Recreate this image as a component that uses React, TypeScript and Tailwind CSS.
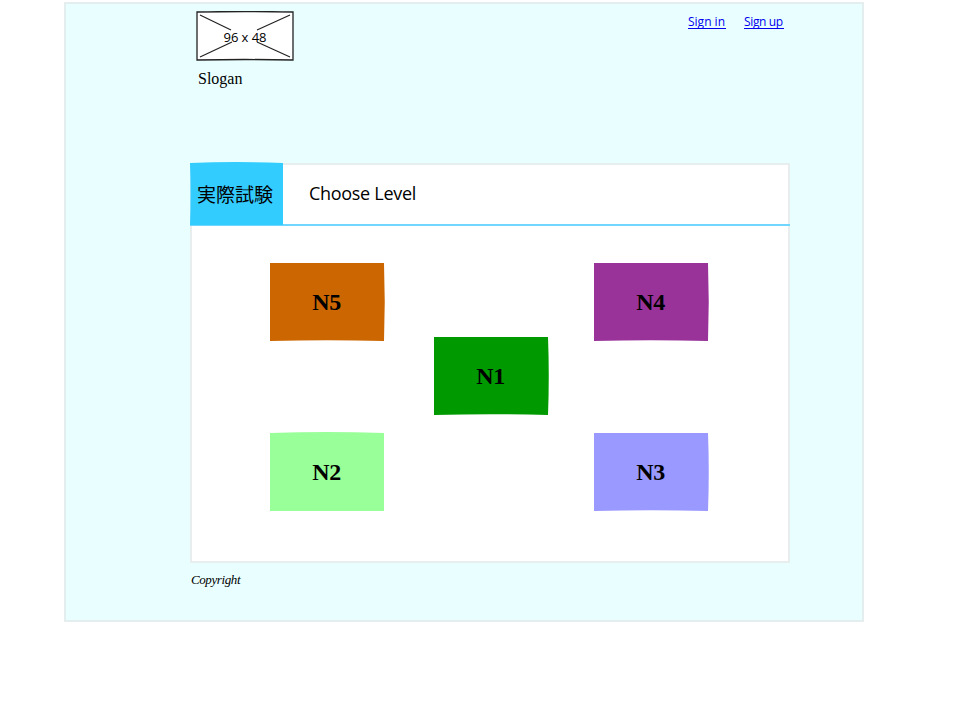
type TileProps = { label: string; place: string; fill: string; shape: string };

const bulgeRight = "M0 0H114Q115.5 39 114 78Q57 76.5 0 78Z";
const bulgeTop = "M0 0Q57 -2 114 0V78H0Z";

const tiles: TileProps[] = [
  { label: "N5", place: "col-start-1 row-start-1", fill: "#cc6600", shape: bulgeRight },
  { label: "N4", place: "col-start-3 row-start-1", fill: "#993399", shape: bulgeRight },
  { label: "N1", place: "col-start-2 row-start-2", fill: "#009900", shape: bulgeRight },
  { label: "N2", place: "col-start-1 row-start-3", fill: "#99ff99", shape: bulgeTop },
  { label: "N3", place: "col-start-3 row-start-3", fill: "#9999ff", shape: bulgeRight },
];

function Tile({ label, place, fill, shape }: TileProps) {
  return (
    <button className={`relative flex h-[78px] w-[114px] items-center justify-center ${place}`}>
      <svg className="absolute inset-0 overflow-visible" width="114" height="78">
        <path d={shape} fill={fill} />
      </svg>
      <span className="relative pr-px text-2xl font-bold leading-none tracking-[-0.3px]">{label}</span>
    </button>
  );
}

function Logo() {
  return (
    <svg className="block" width="98" height="50" viewBox="0 0 98 50">
      <path d="M1 1Q49 0 97 1V49Q49 48 1 49Z" fill="#fff" stroke="#222" strokeWidth="1.3" />
      <path d="M4 4L35 19M94 4L61 19M4 46L36 31M94 46L61 31" stroke="#222" strokeWidth="1.2" fill="none" />
      <text x="49" y="31" textAnchor="middle" fontSize="13" textLength="43" className="font-['Open_Sans',sans-serif]">
        96 x 48
      </text>
    </svg>
  );
}

export default function App() {
  return (
    <div className="h-[724px] w-[958px] bg-white pl-16 pt-0.5 font-['Liberation_Serif',serif] text-black">
      <div className="flex h-[620px] w-[800px] flex-col border-2 border-[#e4eeee] bg-[#e9ffff] pl-[124px]">
        <header className="flex h-[159px] w-[600px] justify-between pl-1.5 pr-1.5 pt-[7px]">
          <div>
            <Logo />
            <p className="ml-0.5 mt-2 text-base leading-5">Slogan</p>
          </div>
          <nav className="mt-1 flex gap-[18px] font-['Open_Sans',sans-serif] text-xs font-medium leading-[13px] text-[#0000ee]">
            <a href="#" className="h-3.5 w-[38px] whitespace-nowrap border-b border-[#0000ee]">Sign in</a>
            <a href="#" className="h-3.5 w-10 whitespace-nowrap border-b border-[#0000ee] tracking-[-0.35px]">Sign up</a>
          </nav>
        </header>
        <main className="h-[400px] w-[600px] border-2 border-[#e8eeee] bg-white">
          <div className="-ml-0.5 -mr-0.5 -mt-0.5 flex h-[63px] border-b-2 border-[#70d6ff]">
            <div className="flex w-full border-r-2 border-t-2 border-[#e8eeee]">
              <div className="relative -mt-0.5 flex h-[62px] w-[93px] items-center justify-center">
                <svg className="absolute inset-0 overflow-visible" width="93" height="62">
                  <path d="M0 0Q46 -2 93 0V62H0Q1 31 0 0Z" fill="#33ccff" />
                </svg>
                <span className="relative pb-0.5 pr-[3px] font-['Noto_Sans_CJK_JP',sans-serif] text-[19px] leading-none">実際試験</span>
              </div>
              <h1 className="ml-[26px] mt-4 whitespace-nowrap font-['Open_Sans',sans-serif] text-lg leading-6 tracking-[-0.3px]">Choose Level</h1>
            </div>
          </div>
          <div className="ml-[78px] mt-[37px] grid grid-cols-[164px_160px_114px] grid-rows-[74px_96px_78px]">
            {tiles.map((tile) => <Tile key={tile.label} {...tile} />)}
          </div>
        </main>
        <footer className="mt-[9px] pl-px text-[13px] italic leading-4 tracking-[-0.4px]">Copyright</footer>
      </div>
    </div>
  );
}
